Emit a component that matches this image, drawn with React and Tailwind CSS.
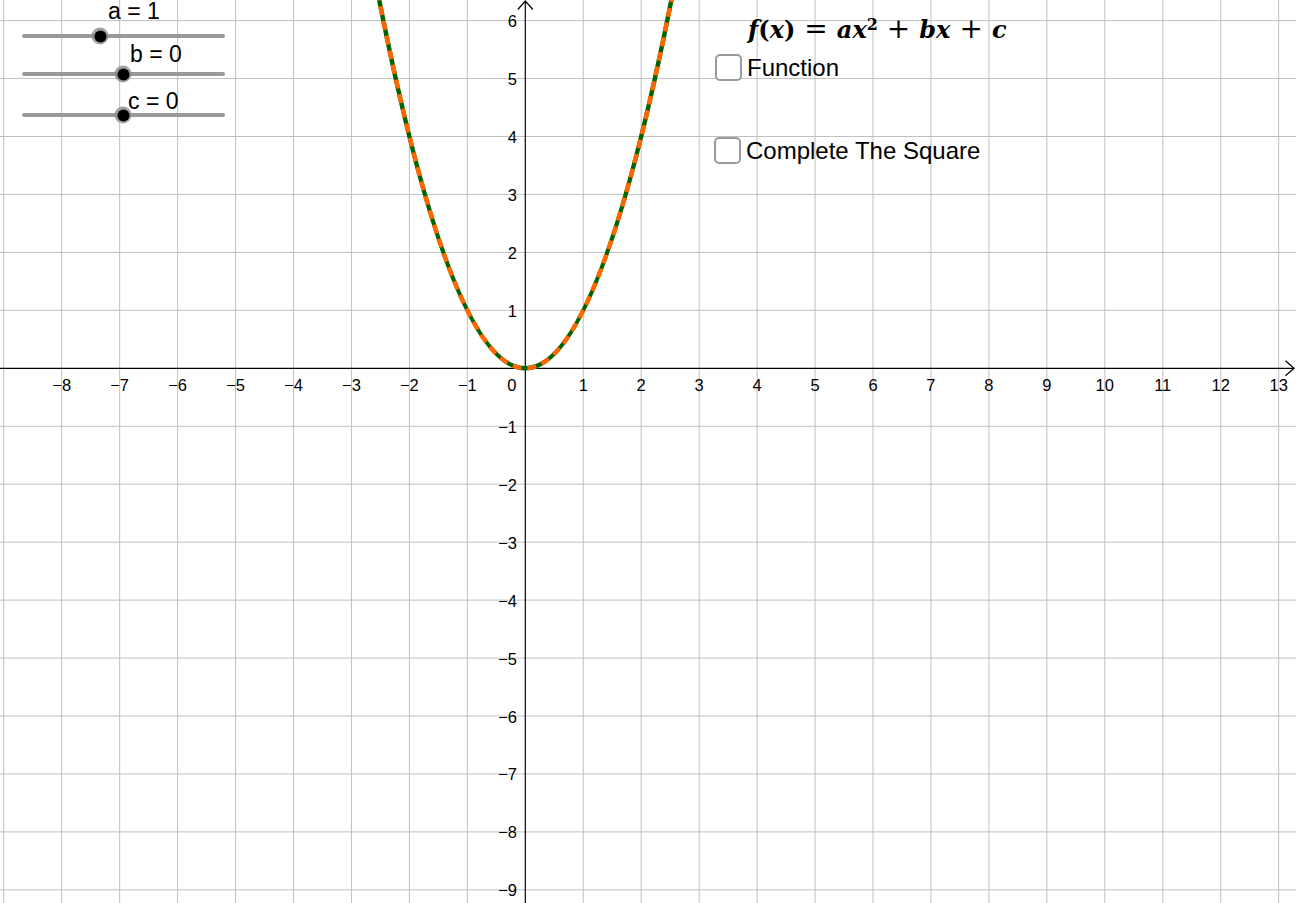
import React from 'react';

const OX = 525.3;
const OY = 368.3;
const U = 57.95;

const sx = (x) => OX + x * U;
const sy = (y) => OY - y * U;

const xs = Array.from({ length: 23 }, (_, i) => i - 9); // -9..13
const ys = Array.from({ length: 16 }, (_, i) => 6 - i); // 6..-9

const fmt = (n) => (n < 0 ? '\u2212' + Math.abs(n) : String(n));

function Graph() {
  // parabola y = x^2 drawn as one quadratic bezier
  const x0 = -2.6;
  const d = `M${sx(x0)},${sy(x0 * x0)} Q${sx(0)},${sy(-x0 * x0)} ${sx(-x0)},${sy(x0 * x0)}`;

  return (
    <svg width="1296" height="903" className="block font-['Liberation_Sans',Arial,sans-serif]">
      {/* grid */}
      <g stroke="#c0c0c0" strokeWidth="1">
        {xs.filter((k) => k !== 0).map((k) => (
          <line key={'v' + k} x1={sx(k)} y1="0" x2={sx(k)} y2="903" />
        ))}
        {ys.filter((k) => k !== 0).map((k) => (
          <line key={'h' + k} x1="0" y1={sy(k)} x2="1296" y2={sy(k)} />
        ))}
      </g>

      {/* axes */}
      <g stroke="#000" strokeWidth="1.2" fill="none">
        <line x1="0" y1={OY} x2="1294" y2={OY} />
        <path d={`M1285.5,${OY - 7.5} L1294,${OY} L1285.5,${OY + 7.5}`} />
        <line x1={OX} y1="1" x2={OX} y2="903" />
        <path d={`M${OX - 7.5},9.5 L${OX},1 L${OX + 7.5},9.5`} />
      </g>

      {/* tick labels */}
      <g fontSize="16.5" fill="#000">
        {xs.filter((k) => k !== 0 && k >= -8).map((k) => (
          <text key={'xl' + k} x={sx(k)} y="390.8" textAnchor="middle">{fmt(k)}</text>
        ))}
        <text x="516.5" y="390.8" textAnchor="end">0</text>
        {ys.filter((k) => k !== 0).map((k) => (
          <text key={'yl' + k} x="517" y={sy(k) + 6.5} textAnchor="end">{fmt(k)}</text>
        ))}
      </g>

      {/* curve */}
      <path d={d} fill="none" stroke="#006400" strokeWidth="4.5" />
      <path d={d} fill="none" stroke="#ff6600" strokeWidth="4.5" strokeDasharray="9 6" />
    </svg>
  );
}

function Slider({ name, value, pos, labelShift, className }) {
  return (
    <div className={'relative flex flex-col ' + className}>
      <div className="text-[23px] leading-none text-black whitespace-pre" style={{ paddingLeft: pos + labelShift }}>
        {name} = {value}
      </div>
      <div className="relative h-[4px] w-[203px] rounded-full bg-[#999999]">
        <div
          className="absolute top-1/2 -translate-x-1/2 -translate-y-1/2 w-[17px] h-[17px] rounded-full bg-[#8a8a8a]/80 flex items-center justify-center"
          style={{ left: pos }}
        >
          <div className="w-[12px] h-[12px] rounded-full bg-black" />
        </div>
      </div>
    </div>
  );
}

function Check({ label, className }) {
  return (
    <div className={'flex items-center gap-[5px] ' + className}>
      <div className="w-[27px] h-[27px] rounded-[5px] border-2 border-[#9a9a9a] bg-white" />
      <span className="text-[24px] leading-none text-black whitespace-pre">{label}</span>
    </div>
  );
}

export default function App() {
  return (
    <div className="relative w-[1296px] h-[903px] overflow-hidden bg-white font-['Liberation_Sans',Arial,sans-serif]">
      <Graph />

      {/* sliders */}
      <div className="absolute left-[22px] top-0 flex flex-col">
        <Slider name="a" value="1" pos={78} labelShift={8} className="gap-[11px]" />
        <Slider name="b" value="0" pos={101} labelShift={7} className="mt-[5px] gap-[6px]" />
        <Slider name="c" value="0" pos={101} labelShift={5} className="mt-[14px] gap-0" />
      </div>

      {/* formula and checkboxes */}
      <div className="absolute left-[715px] top-[15px] flex flex-col">
        <div className="ml-[33px] h-[26px] flex items-baseline text-[24px] leading-none font-bold text-black whitespace-pre font-['DejaVu_Serif','Liberation_Serif',serif]">
          <i>f</i>
          <span>(</span>
          <i>x</i>
          <span>)</span>
          <span className="mx-[9px] font-normal text-[28px]">=</span>
          <i>a</i>
          <i>x</i>
          <sup className="text-[16px]">2</sup>
          <span className="mx-[9px] font-normal text-[28px]">+</span>
          <i>b</i>
          <i>x</i>
          <span className="mx-[9px] font-normal text-[28px]">+</span>
          <i>c</i>
        </div>
        <Check label="Function" className="mt-[13px]" />
        <Check label="Complete The Square" className="mt-[56px] -ml-[1px]" />
      </div>
    </div>
  );
}
